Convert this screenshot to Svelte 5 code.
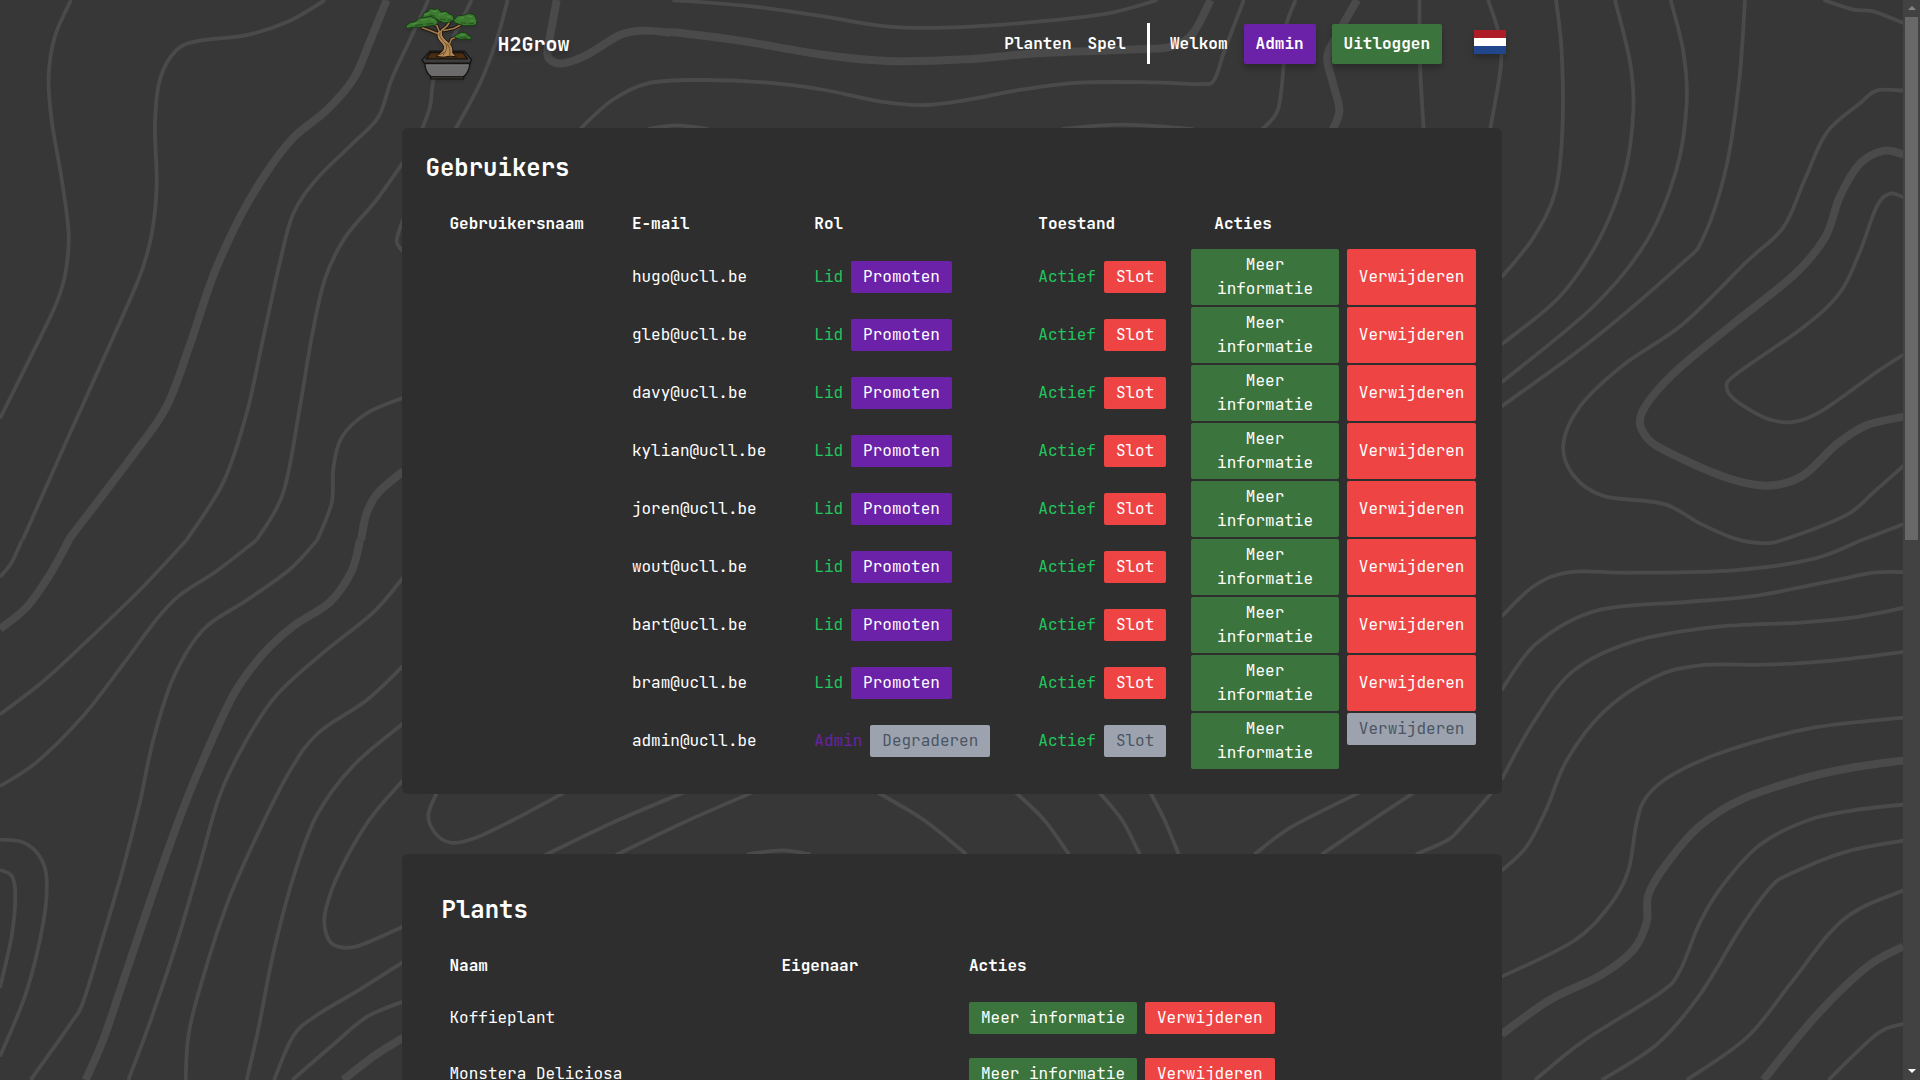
<script>
  const members = ['hugo', 'gleb', 'davy', 'kylian', 'joren', 'wout', 'bart', 'bram'];
  const users = [
    ...members.map((name) => ({ email: `${name}@ucll.be`, admin: false })),
    { email: 'admin@ucll.be', admin: true },
  ];
  const plants = ['Koffieplant', 'Monstera Deliciosa'];

  // Contour lines of the backdrop, grouped per region. A leading "!" marks a heavy contour.
  const regions = [
    {
      transform: 'scale(.33333 .34439)',
      lines: [
        '213,0 165,105 146,220 155,350 185,520 206,680 195,800 165,890 90,1040 0,1215',
        '975,0 870,60 740,102 600,118 530,145 480,230 465,360 470,540 455,680 420,800 330,1000 200,1280 68,1568',
        '!1160,0 1110,120 1060,230 980,320 880,400 800,500 720,630 640,800 570,1000 500,1180 400,1320 205,1568',
        '1285,0 1230,115 1175,230 1135,340 1060,415 950,520 880,620 840,760 790,980 740,1200 670,1400 560,1568',
        '1210,470 1130,580 1035,690 975,810 935,980 900,1180 850,1430 770,1568',
        '1210,635 1190,700 1210,730',
        '1210,1155 1100,1200 1025,1270 1000,1360 995,1460 952,1568',
        '!1210,1368 1135,1430 1100,1490 1083,1568',
      ],
    },
    {
      transform: 'translate(0 540) scale(.33333 .34439)',
      lines: [
        '66,0 35,65 0,108',
        '!207,0 150,100 80,195 0,258',
        '560,0 430,135 270,285 130,410 0,506',
        '770,0 650,90 540,160 470,230 370,360 250,510 110,645 0,715',
        '952,0 870,85 740,175 610,260 520,400 460,580 420,760 370,950 310,1150 250,1340 215,1400 92,1568',
        '!1080,0 1055,90 990,180 880,250 790,330 700,450 600,660 530,830 450,1050 370,1280 310,1450 257,1568',
        '1210,108 1120,210 960,335 830,450 740,580 660,740 600,940 530,1170 450,1400 385,1568',
        '1210,365 1100,465 955,560 870,670 770,860 680,1060 600,1300 565,1440 557,1568',
        '1210,532 1060,655 950,800 880,980 820,1200 775,1420 740,1568',
        '1210,697 1110,810 1020,960 978,1070 975,1130 1000,1175 1070,1180 1210,1122',
        '1210,1225 1080,1305 950,1380 880,1440 822,1568',
        '1210,1340 1100,1385 1000,1465 877,1568',
        '!1210,1445 1120,1500 1030,1568',
        '0,870 70,878 120,920 140,985 130,1110 80,1310 0,1500',
        '0,958 35,975 46,1030 35,1150 0,1300',
      ],
    },
    {
      transform: 'translate(1500 0) scale(.33333 .34439)',
      lines: [
        '168,0 185,150 187,380 165,560 100,690 5,805',
        '345,0 390,180 400,320 375,500 300,690 180,860 5,1000',
        '512,0 550,150 560,300 530,490 440,700 280,890 5,1110',
        '735,0 718,230 680,480 610,690 540,770 280,985 5,1180',
        '970,0 1060,28 1120,33 1210,67',
        '1210,263 1130,263 1080,300 980,385 915,520 850,660 740,760 550,940 370,1060 240,1180 190,1290 220,1380 310,1440 490,1463 600,1520 705,1564 790,1577 860,1564 1040,1495 1120,1430 1210,1353',
        '!1210,448 1150,438 1080,475 1020,570 975,690 880,800 700,940 520,1085 425,1200 440,1270 520,1320 690,1390 810,1410 910,1380 1010,1290 1100,1235 1210,1210',
        '1210,573 1170,562 1130,600 1080,730 1020,850 910,950 710,1085 680,1125 710,1165 800,1215 880,1225 970,1190 1130,1080 1210,1030',
        '1080,1570 1210,1522',
      ],
    },
    {
      transform: 'translate(1500 540) scale(.33333 .34439)',
      lines: [
        '5,222 100,135 210,93 400,95 700,88 940,55 1085,0',
        '5,435 110,300 290,205 560,180 760,163 1000,118 1120,95 1210,93',
        '5,695 100,530 220,380 400,295 640,253 900,240 1060,225 1210,197',
        '5,960 80,890 140,780 200,640 310,500 460,400 600,364 800,362 1000,350 1210,325',
        '5,1268 220,1165 330,1060 385,960 410,820 440,745 520,680 680,612 940,545 1210,516',
        '!5,1435 150,1335 300,1265 400,1190 440,1110 445,1030 500,940 600,830 720,755 900,695 1050,662 1210,640',
        '105,1568 250,1455 480,1315 540,1250 600,1110 670,1000 780,885 920,815 1060,785 1210,768',
        '305,1568 470,1465 600,1320 720,1130 810,1010 870,970 1040,905 1210,873',
        '560,1568 740,1445 870,1290 990,1140 1080,1070 1210,1018',
        '!790,1568 950,1380 1100,1240 1210,1180',
        '985,1568 1130,1435 1210,1405',
      ],
    },
    {
      transform: 'translate(390 0) scale(.33333)',
      lines: [
        '245,0 190,110 150,190 130,240 120,320 95,390',
        '353,0 320,120 270,250 195,390',
        '!500,0 480,110 472,160 485,183 520,190 590,165 690,105 760,92 838,98',
      ],
    },
    {
      transform: 'translate(400 0) scale(.70791 .33333)',
      lines: [
        '!378,97 400,100 480,122 600,165 690,183 800,178 900,160 1040,148 1090,140 1120,100 1145,0',
        '385,0 500,20 600,50 690,80 780,82 900,65 1000,40 1070,0',
        '255,385 300,300 350,250 420,240 520,248 600,270 680,305 740,315 800,300 880,268 960,248 1060,247 1130,252 1150,240 1165,150 1192,0',
        '350,387 390,376 435,387',
        '935,387 1020,374 1120,387',
        '1265,0 1250,90 1248,200 1240,330 1218,387',
        '!1352,0 1325,100 1310,170 1318,250 1327,330 1318,387',
        '1440,0 1441,200 1446,387',
        '1537,0 1552,100 1555,200 1540,387',
      ],
    },
    {
      transform: 'translate(400 790) scale(.70791 .33333)',
      lines: [
        '52,8 40,75 50,130 72,158 105,145 160,90 232,8',
        '400,8 300,98 205,195',
        '497,8 400,98 305,195',
        '490,193 540,181 580,193',
        '675,8 740,90 800,193',
        '870,8 910,90 945,193',
        '988,8 1020,90 1045,193',
        '1060,8 1080,90 1100,193',
        '1355,8 1260,110 1207,193',
        '1432,8 1370,95 1302,193',
        '1542,8 1500,110 1480,150 1435,193',
      ],
    },
  ];

  // Smooth curve through all points (Catmull-Rom converted to cubic Béziers).
  function curve(line) {
    const p = line.replace('!', '').split(' ').map((s) => s.split(',').map(Number));
    let d = `M${p[0]}`;
    for (let i = 0; i < p.length - 1; i++) {
      const a = p[i - 1] ?? p[i];
      const b = p[i];
      const c = p[i + 1];
      const e = p[i + 2] ?? c;
      d += `C${b[0] + (c[0] - a[0]) / 6},${b[1] + (c[1] - a[1]) / 6} ${c[0] - (e[0] - b[0]) / 6},${c[1] - (e[1] - b[1]) / 6} ${c}`;
    }
    return d;
  }
</script>

<div class="window">
  <svg class="contours" viewBox="0 0 1920 1080" aria-hidden="true">
    {#each regions as region}
      <g transform={region.transform}>
        {#each region.lines as line}
          <path class:heavy={line.startsWith('!')} d={curve(line)} />
        {/each}
      </g>
    {/each}
  </svg>

  <div class="page">
    <header>
      <svg class="logo" viewBox="48 24 219 218" aria-label="Bonsai">
        <g stroke="#15130f" stroke-width="4" stroke-linejoin="round">
          <path fill="#3d3d3d" d="M123 156H226L248 182L243 193H106L99 182Z" />
          <path fill="#4a2c10" d="M125 160H222L235 179H111Z" />
          <path fill="#6b6b6b" d="M107 193H243C240 215 233 226 223 233H127C115 225 109 211 107 193Z" />
          <path fill="#555" d="M125 233H224V239H125Z" />
        </g>
        <path fill="none" stroke="#7c7c7c" stroke-width="2" d="M112 198H238" />
        <g fill="none" stroke="#17120c" stroke-width="10" stroke-linecap="round">
          <path d="M147 104L129 96L100 86M151 97L144 80L136 76M157 94L174 80L181 70M165 94L194 88L213 78M181 136L187 120L204 113" />
        </g>
        <path fill="#b48a56" stroke="#17120c" stroke-width="3" d="M146 97L161 92C158 108 163 117 174 125C188 136 193 148 191 161L202 173L184 171L164 174L141 172L158 158C170 145 161 134 152 126C144 118 143 108 146 97Z" />
        <g fill="none" stroke="#a27b4b" stroke-width="5" stroke-linecap="round">
          <path d="M147 104L129 96L100 86M151 97L144 80L136 76M157 94L174 80L181 70M165 94L194 88L213 78M181 136L187 120L204 113" />
        </g>
        <path fill="none" stroke="#6e4d29" stroke-width="3" d="M154 99C148 111 158 121 168 131C177 142 173 154 162 168M174 133C184 147 184 158 181 169M150 168L169 158" />
        <g fill="#3c7a30" stroke="#173b15" stroke-width="3" stroke-linejoin="round">
          <path d="M99 55L106 40L117 38L124 28L136 31L146 28L156 39L171 36L180 44L191 48L196 61L182 69L166 71L151 65L139 57L118 54Z" />
          <path d="M50 80L64 70L80 67L93 56L110 55L123 51L137 56L147 67L143 77L125 80L107 82L92 84L73 84L54 88Z" />
          <path d="M194 63L206 50L224 48L239 43L255 46L260 56L264 65L262 77L249 79L239 80L222 79L210 75L197 71Z" />
          <path d="M194 112L205 105L218 99L231 101L237 109L248 113L245 121L230 119L217 121L203 117Z" />
        </g>
        <g fill="none" stroke="#4d8d3f" stroke-width="4" stroke-linecap="round">
          <path d="M109 46L122 40M130 36L141 37M150 47L166 43M176 51L185 55M71 75L86 71M98 63L116 60M126 61L134 66M211 59L224 55M236 51L248 53M245 64L254 66M215 108L226 106" />
        </g>
        <g fill="none" stroke="#28591f" stroke-width="4" stroke-linecap="round">
          <path d="M124 47L136 51M155 60L169 62M177 63L186 62M80 79L101 76M112 75L132 73M216 71L231 72M239 74L253 72M213 116L231 114" />
        </g>
      </svg>
      <span class="brand">H2Grow</span>
      <nav>
        <a>Planten</a>
        <a>Spel</a>
        <span class="divider"></span>
        <span>Welkom</span>
        <span class="pill purple">Admin</span>
        <span class="pill green">Uitloggen</span>
        <span class="flag"></span>
      </nav>
    </header>

    <section class="users">
      <h2>Gebruikers</h2>
      <div class="row head">
        <span>Gebruikersnaam</span><span>E-mail</span><span>Rol</span><span>Toestand</span><span>Acties</span>
      </div>
      {#each users as user}
        <div class="row">
          <span></span>
          <span>{user.email}</span>
          <div class="cell">
            <span class={user.admin ? 'role-admin' : 'ok'}>{user.admin ? 'Admin' : 'Lid'}</span>
            <button class={user.admin ? 'off' : 'purple'}>{user.admin ? 'Degraderen' : 'Promoten'}</button>
          </div>
          <div class="cell">
            <span class="ok">Actief</span>
            <button class={user.admin ? 'off' : 'red'}>Slot</button>
          </div>
          <div class="actions">
            <button class="green more">Meer informatie</button>
            <button class={user.admin ? 'off top' : 'red'}>Verwijderen</button>
          </div>
        </div>
      {/each}
    </section>

    <section class="plants">
      <h2>Plants</h2>
      <div class="row head"><span>Naam</span><span>Eigenaar</span><span>Acties</span></div>
      {#each plants as plant}
        <div class="row">
          <span>{plant}</span>
          <span></span>
          <div class="cell">
            <button class="green">Meer informatie</button>
            <button class="red">Verwijderen</button>
          </div>
        </div>
      {/each}
    </section>
  </div>

  <div class="scrollbar">
    <i class="up"></i>
    <div class="thumb"></div>
    <i class="down"></i>
  </div>
</div>

<style>
  :global(body) {
    margin: 0;
    background: #373737;
  }
  .window {
    position: relative;
    display: flex;
    width: 1920px;
    height: 1080px;
    overflow: hidden;
    background: #373737;
    color: #fff;
    font: 16px/24px 'JetBrains Mono', 'DejaVu Sans Mono', monospace;
  }
  .contours {
    position: absolute;
    inset: 0;
    width: 1920px;
    height: 1080px;
  }
  .contours path {
    fill: none;
    stroke: #4a4a4a;
    stroke-width: 3.8px;
    vector-effect: non-scaling-stroke;
  }
  .contours path.heavy {
    stroke-width: 8px;
  }
  .page {
    position: relative;
    box-sizing: border-box;
    width: 1903px;
    padding: 0 401.5px;
  }
  header {
    display: flex;
    align-items: center;
    box-sizing: border-box;
    width: 1104.5px;
    height: 88px;
    margin-bottom: 40px;
    padding-left: 3.5px;
  }
  .logo {
    width: 73px;
    height: 73px;
    margin-bottom: 2px;
    filter: drop-shadow(0 2px 1px rgba(0, 0, 0, 0.12));
  }
  .brand {
    margin-left: 19.5px;
    font-size: 20px;
    font-weight: 700;
    text-shadow: 0 4px 5px rgba(0, 0, 0, 0.25);
  }
  nav {
    display: flex;
    align-items: center;
    gap: 16px;
    margin-left: auto;
    font-weight: 700;
  }
  .divider {
    width: 3.5px;
    height: 41px;
    margin: -1px 3.5px 0 5px;
    background: #fff;
  }
  .pill {
    padding: 8px 12px;
    border-radius: 2px;
    box-shadow: 0 4px 6px rgba(0, 0, 0, 0.25);
  }
  .flag {
    width: 32px;
    height: 24px;
    margin: -4px 0 0 16px;
    background: linear-gradient(#ae1c28 33.3%, #fff 33.3% 66.6%, #21468b 66.6%);
    box-shadow: 0 4px 6px rgba(0, 0, 0, 0.25);
  }
  section {
    border-radius: 6px;
    background: #2e2e2e;
  }
  .users {
    height: 618px;
    margin-bottom: 60px;
    padding: 24px;
  }
  .plants {
    padding: 40px;
  }
  h2 {
    margin: 0 0 16px;
    font-size: 24px;
    line-height: 32px;
  }
  .row {
    display: grid;
    align-items: center;
  }
  .row.head {
    height: 48px;
    font-weight: 700;
  }
  .users .row {
    grid-template-columns: 182.4px 182.4px 224px 176px 287.2px;
    height: 58px;
  }
  .users .row.head {
    height: 48px;
  }
  .users .row > span,
  .users .cell {
    padding-left: 24px;
  }
  .plants .row {
    grid-template-columns: 332px 187.5px 1fr;
    height: 56px;
  }
  .plants .row.head {
    height: 48px;
  }
  .plants .row > span,
  .plants .cell {
    padding-left: 8px;
  }
  .cell,
  .actions {
    display: flex;
    align-items: center;
    gap: 8px;
  }
  .actions {
    align-items: stretch;
    padding: 1px;
  }
  button {
    padding: 4px 12px;
    border: 0;
    border-radius: 2px;
    color: #fff;
    font: inherit;
    white-space: nowrap;
  }
  .more {
    flex: 1;
    white-space: normal;
  }
  .top {
    align-self: flex-start;
  }
  .purple {
    background: #6b21a8;
  }
  .green {
    background: #3b753d;
  }
  .red {
    background: #ef4444;
  }
  .off {
    background: #9ca3af;
    color: #4b5563;
  }
  .ok {
    color: #22c55e;
  }
  .role-admin {
    color: #6b21a8;
  }
  .scrollbar {
    position: relative;
    display: flex;
    flex-direction: column;
    align-items: center;
    width: 17px;
    background: #424242;
  }
  .thumb {
    width: 13px;
    height: 523px;
    background: #686868;
  }
  .scrollbar i {
    border: 4px solid transparent;
  }
  .up {
    margin: 2px 0 7px;
    border-bottom-color: #868686 !important;
  }
  .down {
    margin: auto 0 3px;
    border-top-color: #fff !important;
  }
</style>
